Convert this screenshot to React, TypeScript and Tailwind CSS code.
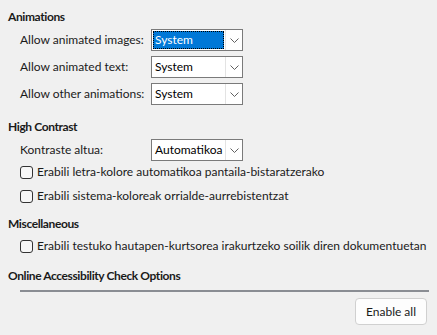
import React from 'react';

function Chevron() {
  return (
    <svg width="9" height="5" viewBox="0 0 9 5" className="text-[#606060]">
      <path d="M0.5 0.5 L4.5 4.5 L8.5 0.5" fill="none" stroke="currentColor" strokeWidth="1" />
    </svg>
  );
}

function Combo({ value, focused = false }: { value: string; focused?: boolean }) {
  return (
    <div className="flex h-[22px] w-[92px] items-stretch border border-[#7a7a7a] bg-white">
      <div className="flex flex-1 items-stretch p-px">
        {focused ? (
          <span className="flex flex-1 items-center border border-dotted border-black bg-[#0078d7] pl-px text-white">
            {value}
          </span>
        ) : (
          <span className="flex flex-1 items-center pl-[2px] text-black">{value}</span>
        )}
      </div>
      <div className="flex w-[17px] items-center justify-center border-l border-[#e3e3e3]">
        <Chevron />
      </div>
    </div>
  );
}

function Row({ label, value, focused }: { label: string; value: string; focused?: boolean }) {
  return (
    <div className="flex h-[22px] items-center">
      <span className="w-[131px] shrink-0 whitespace-nowrap">{label}</span>
      <Combo value={value} focused={focused} />
    </div>
  );
}

function Check({ label }: { label: string }) {
  return (
    <div className="flex h-[22px] items-center">
      <span className="h-[13px] w-[13px] shrink-0 rounded-[3px] border border-[#333] bg-[#f7f7f7]" />
      <span className="ml-[4px] whitespace-nowrap">{label}</span>
    </div>
  );
}

function Heading({ children }: { children: React.ReactNode }) {
  return (
    <div className="flex h-[22px] items-center whitespace-nowrap pl-2 font-bold tracking-[-0.4px]">
      {children}
    </div>
  );
}

export default function App() {
  return (
    <div
      className="h-[335px] w-[437px] overflow-hidden bg-[#f0f0f0] pt-[6px] text-[12px] text-[#1a1a1a]"
      style={{ fontFamily: 'Lato, "Noto Sans", sans-serif' }}
    >
      {/* Animations */}
      <Heading>Animations</Heading>
      <div className="mt-px flex flex-col gap-[5px] pl-5">
        <Row label="Allow animated images:" value="System" focused />
        <Row label="Allow animated text:" value="System" />
        <Row label="Allow other animations:" value="System" />
      </div>

      {/* High Contrast */}
      <div className="mt-[11px]">
        <Heading>High Contrast</Heading>
      </div>
      <div className="mt-px flex flex-col pl-5">
        <Row label="Kontraste altua:" value="Automatikoa" />
        <div className="flex flex-col gap-[2px]">
          <Check label="Erabili letra-kolore automatikoa pantaila-bistaratzerako" />
          <Check label="Erabili sistema-koloreak orrialde-aurrebistentzat" />
        </div>
      </div>

      {/* Miscellaneous */}
      <div className="mt-[6px]">
        <Heading>Miscellaneous</Heading>
      </div>
      <div className="pl-5">
        <Check label="Erabili testuko hautapen-kurtsorea irakurtzeko soilik diren dokumentuetan" />
      </div>

      {/* Online Accessibility Check Options */}
      <div className="mt-[8px]">
        <Heading>Online Accessibility Check Options</Heading>
      </div>
      <div className="ml-5 mr-2 mt-[3px] h-[2px] bg-[#8a8d93]" />
      <div className="mr-[10px] mt-[6px] flex justify-end">
        <button className="h-[27px] w-[72px] rounded-[4px] border border-[#d0d0d0] bg-[#fdfdfd] text-[12px] text-[#1a1a1a]">
          Enable all
        </button>
      </div>
    </div>
  );
}
